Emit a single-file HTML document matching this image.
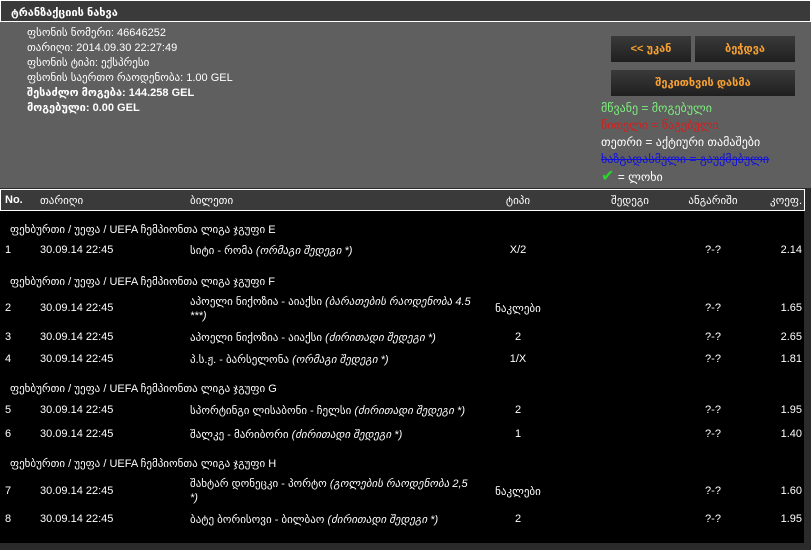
<!DOCTYPE html>
<html><head><meta charset="utf-8"><style>
*{margin:0;padding:0;box-sizing:border-box}
body{width:811px;height:550px;background:#2b2b2b;font-family:"Liberation Sans","DejaVu Sans",sans-serif;font-size:11px;color:#fff;position:relative;overflow:hidden}
.a{position:absolute;white-space:nowrap}
#title{left:0;top:0;width:811px;height:22px;background:#3a3a3a;border:1px solid #fff;font-weight:bold;padding:5px 0 0 10px;font-size:11px}
#info{left:0;top:22px;width:811px;height:166px;background:#5f5f5f}
.btn{position:absolute;background:linear-gradient(#3a3a3a,#1f1f1f);color:#f7a030;font-weight:bold;text-align:center;font-size:11px}
#thead{left:0;top:189px;width:805px;height:22px;background:#3a3a3a;border:1px solid #fff}
#tbody{left:0;top:211px;width:804px;height:332px;background:#000}
i{font-style:italic}
.r{text-align:right}
.c{text-align:center}
</style></head><body>
<div class="a" id="title">ტრანზაქციის ნახვა</div>
<div class="a" id="info"></div>
<div class="a" style="left:27px;top:26px;line-height:15px">ფსონის ნომერი: 46646252<br>თარიღი: 2014.09.30 22:27:49<br>ფსონის ტიპი: ექსპრესი<br>ფსონის საერთო რაოდენობა: 1.00 GEL<br><b>შესაძლო მოგება: 144.258 GEL</b><br><b>მოგებული: 0.00 GEL</b></div>
<div class="btn" style="left:611px;top:36px;width:80px;height:26px;line-height:26px">&lt;&lt; უკან</div>
<div class="btn" style="left:695px;top:36px;width:100px;height:26px;line-height:26px">ბეჭდვა</div>
<div class="btn" style="left:611px;top:70px;width:184px;height:26px;line-height:26px">შეკითხვის დასმა</div>
<div class="a" style="left:601px;top:100px;line-height:17px;font-size:12px">
<span style="color:#7cf07c">მწვანე = მოგებული</span><br>
<span style="color:#d02020">წითელი = წაგებული</span><br>
<span style="color:#fff">თეთრი = აქტიური თამაშები</span><br>
<span style="color:#1010e0;text-decoration:line-through">ხაზგადასმული = გაუქმებული</span><br>
<span style="color:#2ad42a;font-size:16px;font-weight:bold">✔</span> = ლოხი</div>
<div class="a" id="thead"></div>
<div class="a" style="top:194px;left:5px;font-weight:bold">No.</div>
<div class="a" style="top:194px;left:40px">თარიღი</div>
<div class="a" style="top:194px;left:190px">ბილეთი</div>
<div class="a c" style="top:194px;left:488px;width:60px">ტიპი</div>
<div class="a c" style="top:194px;left:595px;width:70px">შედეგი</div>
<div class="a c" style="top:194px;left:680px;width:66px">ანგარიში</div>
<div class="a r" style="top:194px;left:740px;width:62px">კოეფ.</div>
<div class="a" id="tbody"></div>
<div class="a" style="top:223px;left:10px">ფეხბურთი / უეფა / UEFA ჩემპიონთა ლიგა ჯგუფი E</div>
<div class="a" style="top:275px;left:10px">ფეხბურთი / უეფა / UEFA ჩემპიონთა ლიგა ჯგუფი F</div>
<div class="a" style="top:382px;left:10px">ფეხბურთი / უეფა / UEFA ჩემპიონთა ლიგა ჯგუფი G</div>
<div class="a" style="top:457px;left:10px">ფეხბურთი / უეფა / UEFA ჩემპიონთა ლიგა ჯგუფი H</div>

<div class="a" style="top:244px;left:5px">1</div><div class="a" style="top:244px;left:40px">30.09.14 22:45</div><div class="a" style="top:244px;left:190px">სიტი - რომა <i>(ორმაგი შედეგი *)</i></div><div class="a c" style="top:244px;left:488px;width:60px">X/2</div><div class="a c" style="top:244px;left:680px;width:66px">?-?</div><div class="a r" style="top:244px;left:740px;width:62px">2.14</div>

<div class="a" style="top:302px;left:5px">2</div><div class="a" style="top:302px;left:40px">30.09.14 22:45</div><div class="a" style="top:295px;left:190px;line-height:14px">აპოელი ნიქოზია - აიაქსი <i>(ბარათების რაოდენობა 4.5</i><br><i>***)</i></div><div class="a c" style="top:302px;left:488px;width:60px">ნაკლები</div><div class="a c" style="top:302px;left:680px;width:66px">?-?</div><div class="a r" style="top:302px;left:740px;width:62px">1.65</div>

<div class="a" style="top:331px;left:5px">3</div><div class="a" style="top:331px;left:40px">30.09.14 22:45</div><div class="a" style="top:331px;left:190px">აპოელი ნიქოზია - აიაქსი <i>(ძირითადი შედეგი *)</i></div><div class="a c" style="top:331px;left:488px;width:60px">2</div><div class="a c" style="top:331px;left:680px;width:66px">?-?</div><div class="a r" style="top:331px;left:740px;width:62px">2.65</div>

<div class="a" style="top:353px;left:5px">4</div><div class="a" style="top:353px;left:40px">30.09.14 22:45</div><div class="a" style="top:353px;left:190px">პ.ს.ჟ. - ბარსელონა <i>(ორმაგი შედეგი *)</i></div><div class="a c" style="top:353px;left:488px;width:60px">1/X</div><div class="a c" style="top:353px;left:680px;width:66px">?-?</div><div class="a r" style="top:353px;left:740px;width:62px">1.81</div>

<div class="a" style="top:404px;left:5px">5</div><div class="a" style="top:404px;left:40px">30.09.14 22:45</div><div class="a" style="top:404px;left:190px">სპორტინგი ლისაბონი - ჩელსი <i>(ძირითადი შედეგი *)</i></div><div class="a c" style="top:404px;left:488px;width:60px">2</div><div class="a c" style="top:404px;left:680px;width:66px">?-?</div><div class="a r" style="top:404px;left:740px;width:62px">1.95</div>

<div class="a" style="top:428px;left:5px">6</div><div class="a" style="top:428px;left:40px">30.09.14 22:45</div><div class="a" style="top:428px;left:190px">შალკე - მარიბორი <i>(ძირითადი შედეგი *)</i></div><div class="a c" style="top:428px;left:488px;width:60px">1</div><div class="a c" style="top:428px;left:680px;width:66px">?-?</div><div class="a r" style="top:428px;left:740px;width:62px">1.40</div>

<div class="a" style="top:485px;left:5px">7</div><div class="a" style="top:485px;left:40px">30.09.14 22:45</div><div class="a" style="top:477px;left:190px;line-height:14px">შახტარ დონეცკი - პორტო <i>(გოლების რაოდენობა 2,5</i><br><i>*)</i></div><div class="a c" style="top:485px;left:488px;width:60px">ნაკლები</div><div class="a c" style="top:485px;left:680px;width:66px">?-?</div><div class="a r" style="top:485px;left:740px;width:62px">1.60</div>

<div class="a" style="top:513px;left:5px">8</div><div class="a" style="top:513px;left:40px">30.09.14 22:45</div><div class="a" style="top:513px;left:190px">ბატე ბორისოვი - ბილბაო <i>(ძირითადი შედეგი *)</i></div><div class="a c" style="top:513px;left:488px;width:60px">2</div><div class="a c" style="top:513px;left:680px;width:66px">?-?</div><div class="a r" style="top:513px;left:740px;width:62px">1.95</div>
</body></html>
